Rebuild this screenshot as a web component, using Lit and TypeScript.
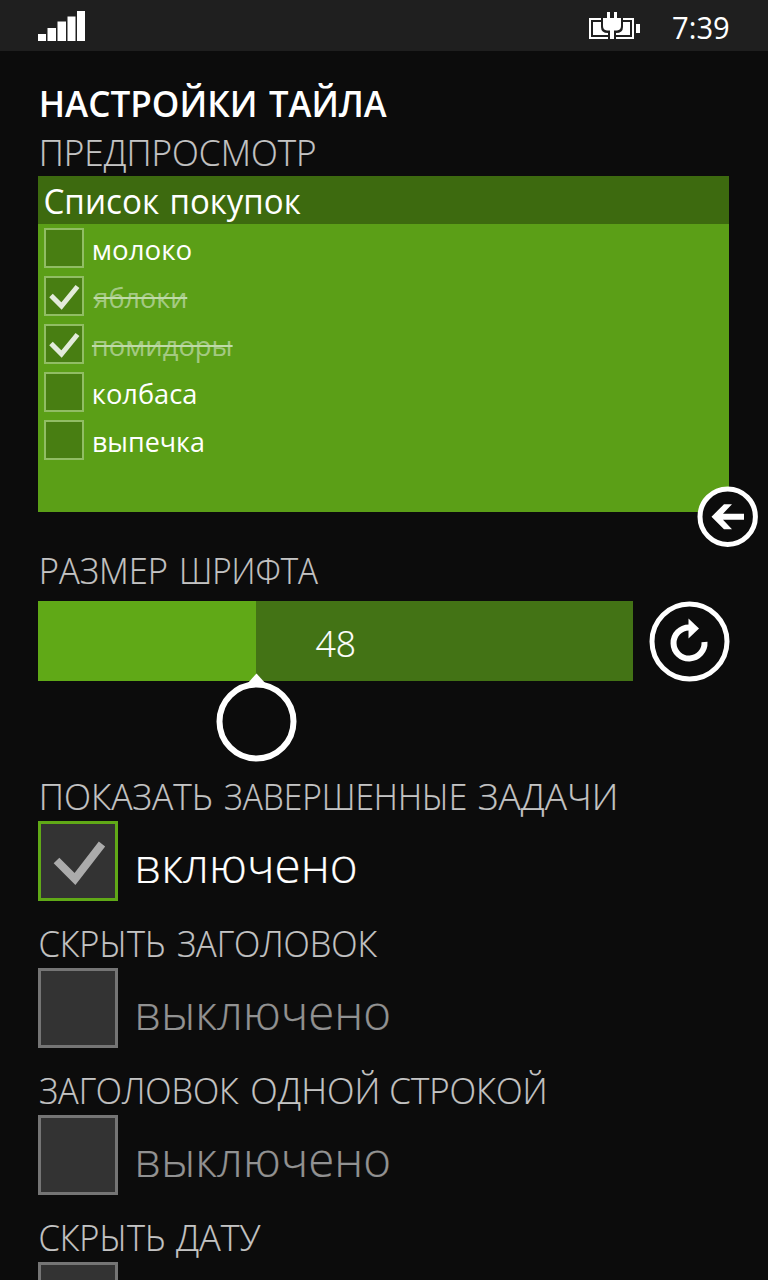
import { LitElement, html, css, svg } from "lit";
import { customElement, property } from "lit/decorators.js";
import { classMap } from "lit/directives/class-map.js";
import { styleMap } from "lit/directives/style-map.js";

/** A word with the left and right edges of its ink, measured from the line's start. */
type Word = [text: string, from: number, to: number];

/** Words are measured at this multiple of their size, for sub-pixel edges. */
const PRECISION = 20;

/** A line of text whose words are condensed or widened to given ink edges. */
@customElement("fit-text")
class FitText extends LitElement {
  @property({ attribute: false }) words: Word[] = [];
  static styles = css`
    :host { display: flex; white-space: nowrap; }
    .word { flex: none; text-decoration: inherit; }
    .ink { display: inline-block; transform-origin: 0 50%; text-decoration: inherit; }
  `;
  render() {
    return this.words.map(([text, from, to], i) => {
      const previous = i ? this.words[i - 1][2] : 0;
      const place = { marginLeft: `${from - previous}px`, width: `${to - from}px` };
      return html`<span class="word" style=${styleMap(place)}><span class="ink">${text}</span></span>`;
    });
  }
  updated() {
    const context = document.createElement("canvas").getContext("2d")!;
    const own = getComputedStyle(this);
    context.font = `${own.fontWeight} ${parseFloat(own.fontSize) * PRECISION}px ${own.fontFamily}`;
    this.renderRoot.querySelectorAll<HTMLElement>(".ink").forEach((ink, i) => {
      const [text, from, to] = this.words[i];
      const m = context.measureText(text);
      const left = m.actualBoundingBoxLeft / PRECISION;
      const right = m.actualBoundingBoxRight / PRECISION;
      const scale = (to - from) / (left + right);
      ink.style.transform = `translateX(${left * scale}px) scaleX(${scale})`;
    });
  }
}

const tasks: { word: Word; done: boolean }[] = [
  { word: ["молоко", 2.2, 98.8], done: false },
  { word: ["яблоки", 1.5, 92.8], done: true },
  { word: ["помидоры", 2.2, 138.6], done: true },
  { word: ["колбаса", 2.2, 103.6], done: false },
  { word: ["выпечка", 2.2, 111.2], done: false },
];

const options: { label: Word[]; state: Word[]; on: boolean }[] = [
  { label: [["ПОКАЗАТЬ", 4, 173.2], ["ЗАВЕРШЕННЫЕ", 187, 427.5], ["ЗАДАЧИ", 441, 576.7]], state: [["включено", 5.2, 222.2]], on: true },
  { label: [["СКРЫТЬ", 2.3, 126], ["ЗАГОЛОВОК", 139.8, 339.2]], state: [["выключено", 5.2, 255.6]], on: false },
  { label: [["ЗАГОЛОВОК", 2.3, 201.2], ["ОДНОЙ", 213.9, 338.7], ["СТРОКОЙ", 352.7, 506]], state: [["выключено", 5.2, 255.6]], on: false },
  { label: [["СКРЫТЬ", 2.3, 126], ["ДАТУ", 137.8, 222.5]], state: [], on: false },
];

@customElement("app-root")
class AppRoot extends LitElement {
  static styles = css`
    :host { display: block; height: 1280px; overflow: hidden; background: #0c0c0c; color: #fff;
      font-family: "Open Sans", "Noto Sans", sans-serif; }
    svg { display: block; flex: none; }
    .status { height: 51px; box-sizing: border-box; background: #1f1f1f; display: flex; align-items: flex-start; padding: 0 38px; }
    .signal { margin-top: 10px; }
    .battery { margin-left: auto; margin-top: 12px; }
    .clock { margin: 2px 0 0 31px; width: 59px; font-size: 31px; line-height: 50px; }
    .page { padding: 31px 38px 0; }
    .title { font-size: 36px; font-weight: 600; line-height: 44px; }
    .label { font-size: 36px; font-weight: 300; line-height: 50px; color: #c4c4c4; -webkit-text-stroke: 0.2px; }
    .preview-label { padding-top: 2px; margin-bottom: -2px; }
    .tile { position: relative; width: 691px; height: 336px; background: #5b9f17; }
    .tile-head { height: 48px; line-height: 50px; font-size: 34px; background: #3d6a0f; }
    .task { display: flex; height: 48px; padding: 4px 6px 0; box-sizing: border-box; gap: 8px; }
    .box { width: 40px; height: 40px; box-sizing: border-box; border: 2px solid #91bd64; background: #487e12; flex: none; }
    .task-name { font-size: 28px; line-height: 42px; }
    .struck { color: #a3c981; text-decoration: line-through 2px #bfdaa8; }
    .back { position: absolute; left: 659px; top: 310px; }
    .size-label { padding-top: 34px; }
    .size-row { display: flex; justify-content: space-between; height: 80px; margin-top: 5px; width: 692px; }
    .slider { position: relative; width: 595px; height: 80px; background: #437315; }
    .fill { width: 218px; height: 80px; background: #60a917; }
    .value { position: absolute; left: 277px; top: 17px; font-size: 37px; line-height: 50px; font-weight: 300; -webkit-text-stroke: 0.2px; }
    .thumb { position: absolute; left: 178px; top: 71px; }
    .options { padding-top: 91px; }
    .option { height: 147px; }
    .row { display: flex; gap: 15px; }
    .check { width: 80px; height: 80px; box-sizing: border-box; border: 3px solid #757575; background: #333; flex: none; margin-top: -1px; }
    .check.on { border-color: #60a917; }
    .state { font-size: 48px; line-height: 86px; font-weight: 300; color: #929292; -webkit-text-stroke: 0.2px; }
    .state.on { color: #fff; }
  `;

  render() {
    return html`
      <div class="status">
        <svg class="signal" width="48" height="31" viewBox="38 10 48 31" fill="#fff">
          <path d="M38 34h8v7h-8zM47.500 28h8.500v13h-8.500zM57.500 21.500h8.500v19.500h-8.500zM67.500 16.500h8v24.500h-8zM77 11h8v30h-8z"/>
        </svg>
        <svg class="battery" width="51" height="28" viewBox="589 12 51 28">
          <path fill="none" stroke="#fff" stroke-width="2" d="M590 19H633V38H590Z"/>
          <path fill="#fff" d="M593 22H630V35H593ZM636 24h4v9h-4z"/>
          <path fill="#1f1f1f" d="M601 16H623V27Q623 33 616 33V40H608V33Q601 33 601 27Z"/>
          <path fill="#fff" d="M607 12h3v6h4v-6h3v6h4v8q0 4-4 4.500h-3V39h-4v-8.500h-3q-4-.5-4-4.500v-8h4z"/>
        </svg>
        <fit-text class="clock" .words=${[["7:39", 2, 57.5]]}></fit-text>
      </div>
      <div class="page">
        <fit-text class="title" .words=${[["НАСТРОЙКИ", 4, 216.3], ["ТАЙЛА", 230.6, 348.7]]}></fit-text>
        <fit-text class="label preview-label" .words=${[["ПРЕДПРОСМОТР", 4, 276.7]]}></fit-text>
        <div class="tile">
          <div class="tile-head"><fit-text .words=${[["Список", 7, 121], ["покупок", 133.6, 262.3]]}></fit-text></div>
          ${tasks.map((t) => html`
            <div class="task">
              <div class="box">${t.done ? html`<svg width="36" height="36" viewBox="0 0 36 36">
                ${svg`<path d="M5 17.500L15.500 28L31.500 8.500" fill="none" stroke="#e3ebda" stroke-width="5"/>`}
              </svg>` : ""}</div>
              <fit-text class=${classMap({ "task-name": true, struck: t.done })} .words=${[t.word]}></fit-text>
            </div>`)}
          <svg class="back" width="61" height="61" viewBox="0 0 61 61">
            <circle cx="30.700" cy="30.700" r="27.700" fill="#0c0c0c" stroke="#fff" stroke-width="5"/>
            <path fill="#fff" d="M14.500 30.700L27 18.200H35L26 27.700H47V33.700H26L35 43.200H27Z"/>
          </svg>
        </div>
        <fit-text class="label size-label" .words=${[["РАЗМЕР", 4, 128], ["ШРИФТА", 144.4, 280.6]]}></fit-text>
        <div class="size-row">
          <div class="slider">
            <div class="fill"></div>
            <fit-text class="value" .words=${[["48", 0.7, 38.7]]}></fit-text>
            <svg class="thumb" width="82" height="90" viewBox="0 0 82 90">
              <path fill="#fff" d="M40.500 1.500L50 12H31Z"/>
              <circle cx="40.500" cy="49.500" r="37" fill="#0c0c0c" stroke="#fff" stroke-width="6"/>
            </svg>
          </div>
          <svg width="81" height="81" viewBox="0 0 81 81">
            <circle cx="40.500" cy="40.500" r="37.500" fill="none" stroke="#fff" stroke-width="5"/>
            <path d="M40 26.500A15.500 15.500 0 1 0 55.500 41" fill="none" stroke="#fff" stroke-width="6"/>
            <path d="M39.500 17.500L50 27.500L39.500 37.500Z" fill="#fff"/>
          </svg>
        </div>
        <div class="options">
          ${options.map((o) => html`
            <div class="option">
              <fit-text class="label" .words=${o.label}></fit-text>
              <div class="row">
                <div class=${classMap({ check: true, on: o.on })}>${o.on ? html`<svg width="74" height="74" viewBox="0 0 74 74">
                  <path d="M15.500 36.500L34 55L61 20" fill="none" stroke="#ababab" stroke-width="8"/>
                </svg>` : ""}</div>
                <fit-text class=${classMap({ state: true, on: o.on })} .words=${o.state}></fit-text>
              </div>
            </div>`)}
        </div>
      </div>`;
  }
}
